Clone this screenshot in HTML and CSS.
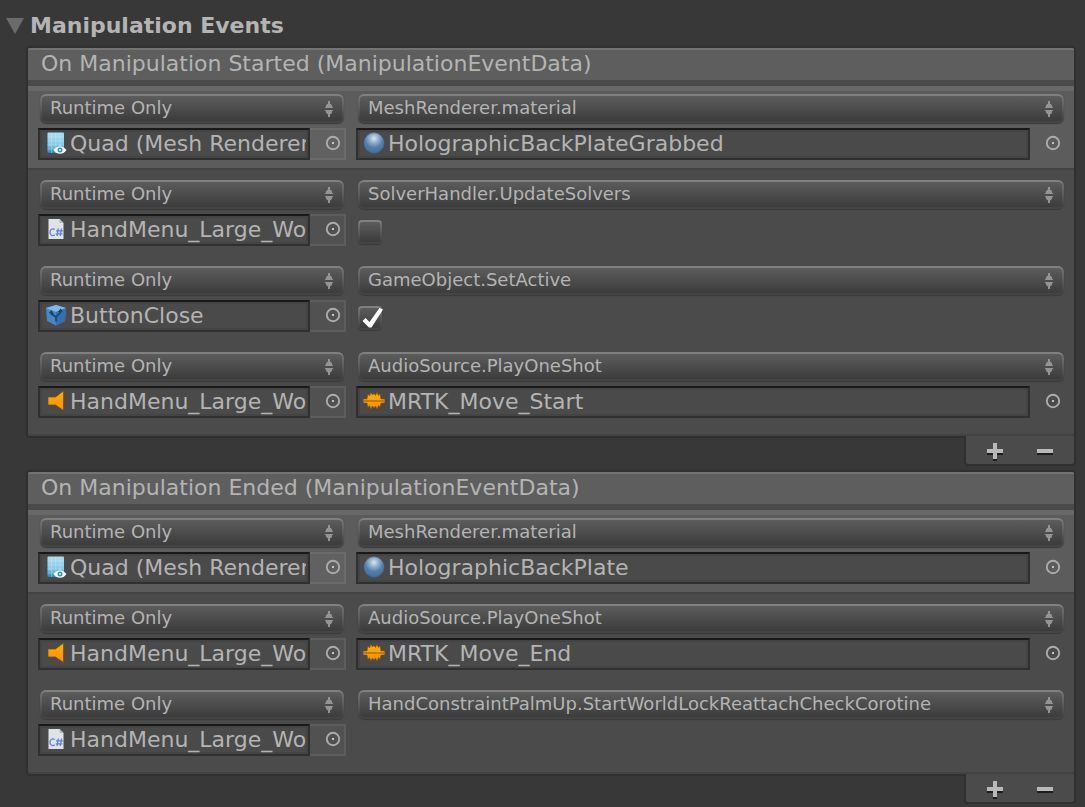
FILE: index.html
```html
<!DOCTYPE html>
<html lang="en">
<head>
<meta charset="utf-8">
<title>Manipulation Events</title>
<link rel="stylesheet" href="styles.css">
</head>
<body>
<svg class="defs" aria-hidden="true">
  <defs>
    <linearGradient id="g-mesh" x1="0" y1="0" x2="0" y2="1"><stop offset="0" stop-color="#a9def2"/><stop offset=".6" stop-color="#83c8e8"/><stop offset="1" stop-color="#2b86bd"/></linearGradient>
    <radialGradient id="g-ball" cx=".5" cy=".28" r=".7"><stop offset="0" stop-color="#dbe6ee"/><stop offset=".3" stop-color="#94b1cb"/><stop offset=".62" stop-color="#5580ab"/><stop offset="1" stop-color="#456f9c"/></radialGradient>
    <linearGradient id="g-sound" x1="0" y1="0" x2="0" y2="1"><stop offset="0" stop-color="#ffb000"/><stop offset="1" stop-color="#ff8c00"/></linearGradient>
    <symbol id="i-mesh" viewBox="0 0 22 22">
      <rect x="2.500" y=".5" width="16.500" height="20.500" rx="1" fill="url(#g-mesh)"/>
      <path d="M6.500 1v20M10.700 1v20M15 1v20M2.500 5H19M2.500 9H19M2.500 13H19M2.500 17H19" stroke="#d6f1fb" stroke-width=".6" opacity=".55"/>
      <path d="M8.500 18C10.500 15.500 12.500 14.500 15 14.500S19.500 15.500 21.500 18C19.500 20.800 17.500 21.700 15 21.700S10.500 20.800 8.500 18z" fill="#f4f8fa"/>
      <circle cx="15" cy="18" r="2.500" fill="#3f92b4"/><circle cx="15" cy="18" r=".9" fill="#e7f4fa"/>
    </symbol>
    <symbol id="i-ball" viewBox="0 0 22 22"><circle cx="11" cy="11" r="10.400" fill="url(#g-ball)" stroke="#3b5470" stroke-width=".6"/></symbol>
    <symbol id="i-script" viewBox="0 0 22 22">
      <path d="M3.500 1h11l4 4v16h-15z" fill="#dfe3e7"/><path d="M14.500 1v4h4z" fill="#b4bac0"/>
      <path d="M9.700 11.500C7.400 10 5 11.300 5 14.200s2.400 4.200 4.700 2.700M13.300 10.500L12.100 18M16.500 10.500L15.300 18M11 12.800h7M10.700 15.800h6.800" fill="none" stroke="#5583dc" stroke-width="1.300"/>
    </symbol>
    <symbol id="i-prefab" viewBox="0 0 22 22">
      <path d="M1 4l10-3 10 3-1 13-9 4.500L2 17z" fill="#4687c8"/>
      <path d="M1 4l10-3 10 3-10 4z" fill="#80b8e8"/>
      <path d="M11 8l10-4-1 13-9 4.500z" fill="#3370b3"/>
      <path d="M11 17.500V13L6.500 10V8M11 13l4.500-4.500V7" fill="none" stroke="#1d4459" stroke-width="1.600"/>
      <path d="M4 9l2.500-3L9 10zM13 8l2.500-3.500L18 7.500z" fill="#1d4459"/>
    </symbol>
    <symbol id="i-speaker" viewBox="0 0 22 22"><path d="M3 7h7.500l8-6v19.500l-8-5.500H3z" fill="url(#g-sound)" stroke="#6b4a14" stroke-width=".7"/></symbol>
    <symbol id="i-wave" viewBox="0 0 22 22">
      <path d="M.3 9H4L5 4l1.500 2L8 2.500 9.500 5 11 3.500 12.500 5.500 14 2.500l1.500 3L17 4l1 5h3.700v4H18l-1 4-1.500-1.500L14 19l-1.500-3L11 18l-1.500-2L8 19l-1.500-3.500L5 17.500 4 13H.3z" fill="url(#g-sound)" stroke="#7a5210" stroke-width=".5"/>
      <path d="M1 11h20" stroke="#8f5500" stroke-width="1"/>
    </symbol>
    <symbol id="i-pick" viewBox="0 0 16 16"><circle cx="8" cy="8" r="6.200" fill="none" stroke="#acacac" stroke-width="1.900"/><rect x="7" y="7" width="2" height="2" fill="#c4c4c4"/></symbol>
    <symbol id="i-updown" viewBox="0 0 10 18"><path d="M4 1h2v2.500L8 5v1.500L9.500 8H.5L2 6.500V5l2-1.500zM.5 10h9L8 11.500V13l-2 1.500V17H4v-2.500L2 13v-1.500z" fill="#949494"/></symbol>
    <symbol id="i-check" viewBox="0 0 24 24"><path d="M2.500 14L5.500 11l4 4L19.500 1l3.500 1.500L11.500 20.500H9z" fill="#fff"/></symbol>
    <symbol id="i-plus" viewBox="0 0 18 18"><path d="M1 10h16v2h-6v6H7v-6H1z" fill="#1d1d1d"/><path d="M7 0h4v6h6v4h-6v6H7v-6H1V6h6z" fill="#b9b9b9"/></symbol>
    <symbol id="i-minus" viewBox="0 0 18 18"><path d="M1 10h16v2H1z" fill="#1d1d1d"/><path d="M1 6h16v4H1z" fill="#b9b9b9"/></symbol>
  </defs>
</svg>
<main class="inspector">
  <h1 class="title"><svg class="fold" viewBox="0 0 18 16" aria-hidden="true"><path d="M0 0h18L9 16z" fill="#6b6b6b"/></svg>Manipulation Events</h1>

  <section class="event">
    <div class="box">
      <h2 class="head">On Manipulation Started (ManipulationEventData)</h2>
      <ul class="list">
        <li class="row selected">
          <div class="drop"><select aria-label="Call state"><option>Runtime Only</option></select><svg><use href="#i-updown"/></svg></div>
          <div class="drop"><select aria-label="Function"><option>MeshRenderer.material</option></select><svg><use href="#i-updown"/></svg></div>
          <div class="object target"><div class="field"><svg><use href="#i-mesh"/></svg><input type="text" readonly aria-label="Target" value="Quad (Mesh Renderer)"></div><button class="pick" aria-label="Select target"><svg><use href="#i-pick"/></svg></button></div>
          <div class="object"><div class="field"><svg><use href="#i-ball"/></svg><input type="text" readonly aria-label="Argument" value="HolographicBackPlateGrabbed"></div><button class="pick" aria-label="Select argument"><svg><use href="#i-pick"/></svg></button></div>
        </li>
        <li class="row">
          <div class="drop"><select aria-label="Call state"><option>Runtime Only</option></select><svg><use href="#i-updown"/></svg></div>
          <div class="drop"><select aria-label="Function"><option>SolverHandler.UpdateSolvers</option></select><svg><use href="#i-updown"/></svg></div>
          <div class="object target"><div class="field"><svg><use href="#i-script"/></svg><input type="text" readonly aria-label="Target" value="HandMenu_Large_WorldLock"></div><button class="pick" aria-label="Select target"><svg><use href="#i-pick"/></svg></button></div>
          <label class="toggle"><input type="checkbox" aria-label="UpdateSolvers"><svg><use href="#i-check"/></svg></label>
        </li>
        <li class="row">
          <div class="drop"><select aria-label="Call state"><option>Runtime Only</option></select><svg><use href="#i-updown"/></svg></div>
          <div class="drop"><select aria-label="Function"><option>GameObject.SetActive</option></select><svg><use href="#i-updown"/></svg></div>
          <div class="object target"><div class="field"><svg><use href="#i-prefab"/></svg><input type="text" readonly aria-label="Target" value="ButtonClose"></div><button class="pick" aria-label="Select target"><svg><use href="#i-pick"/></svg></button></div>
          <label class="toggle"><input type="checkbox" checked aria-label="SetActive"><svg><use href="#i-check"/></svg></label>
        </li>
        <li class="row">
          <div class="drop"><select aria-label="Call state"><option>Runtime Only</option></select><svg><use href="#i-updown"/></svg></div>
          <div class="drop"><select aria-label="Function"><option>AudioSource.PlayOneShot</option></select><svg><use href="#i-updown"/></svg></div>
          <div class="object target"><div class="field"><svg><use href="#i-speaker"/></svg><input type="text" readonly aria-label="Target" value="HandMenu_Large_WorldLock"></div><button class="pick" aria-label="Select target"><svg><use href="#i-pick"/></svg></button></div>
          <div class="object"><div class="field"><svg><use href="#i-wave"/></svg><input type="text" readonly aria-label="Argument" value="MRTK_Move_Start"></div><button class="pick" aria-label="Select argument"><svg><use href="#i-pick"/></svg></button></div>
        </li>
      </ul>
    </div>
    <div class="foot"><button aria-label="Add"><svg><use href="#i-plus"/></svg></button><button aria-label="Remove"><svg><use href="#i-minus"/></svg></button></div>
  </section>

  <section class="event">
    <div class="box">
      <h2 class="head">On Manipulation Ended (ManipulationEventData)</h2>
      <ul class="list">
        <li class="row selected">
          <div class="drop"><select aria-label="Call state"><option>Runtime Only</option></select><svg><use href="#i-updown"/></svg></div>
          <div class="drop"><select aria-label="Function"><option>MeshRenderer.material</option></select><svg><use href="#i-updown"/></svg></div>
          <div class="object target"><div class="field"><svg><use href="#i-mesh"/></svg><input type="text" readonly aria-label="Target" value="Quad (Mesh Renderer)"></div><button class="pick" aria-label="Select target"><svg><use href="#i-pick"/></svg></button></div>
          <div class="object"><div class="field"><svg><use href="#i-ball"/></svg><input type="text" readonly aria-label="Argument" value="HolographicBackPlate"></div><button class="pick" aria-label="Select argument"><svg><use href="#i-pick"/></svg></button></div>
        </li>
        <li class="row">
          <div class="drop"><select aria-label="Call state"><option>Runtime Only</option></select><svg><use href="#i-updown"/></svg></div>
          <div class="drop"><select aria-label="Function"><option>AudioSource.PlayOneShot</option></select><svg><use href="#i-updown"/></svg></div>
          <div class="object target"><div class="field"><svg><use href="#i-speaker"/></svg><input type="text" readonly aria-label="Target" value="HandMenu_Large_WorldLock"></div><button class="pick" aria-label="Select target"><svg><use href="#i-pick"/></svg></button></div>
          <div class="object"><div class="field"><svg><use href="#i-wave"/></svg><input type="text" readonly aria-label="Argument" value="MRTK_Move_End"></div><button class="pick" aria-label="Select argument"><svg><use href="#i-pick"/></svg></button></div>
        </li>
        <li class="row">
          <div class="drop"><select aria-label="Call state"><option>Runtime Only</option></select><svg><use href="#i-updown"/></svg></div>
          <div class="drop"><select aria-label="Function"><option>HandConstraintPalmUp.StartWorldLockReattachCheckCorotine</option></select><svg><use href="#i-updown"/></svg></div>
          <div class="object target"><div class="field"><svg><use href="#i-script"/></svg><input type="text" readonly aria-label="Target" value="HandMenu_Large_WorldLock"></div><button class="pick" aria-label="Select target"><svg><use href="#i-pick"/></svg></button></div>
        </li>
      </ul>
    </div>
    <div class="foot"><button aria-label="Add"><svg><use href="#i-plus"/></svg></button><button aria-label="Remove"><svg><use href="#i-minus"/></svg></button></div>
  </section>
</main>
</body>
</html>
```
FILE: styles.css
```css
* { box-sizing: border-box; }

body {
  margin: 0;
  background: #383838;
  color: #b4b4b4;
  font-family: "DejaVu Sans", Verdana, sans-serif;
  font-size: 22px;
}

svg { display: block; }
.defs { position: absolute; width: 0; height: 0; }

button, input, select {
  margin: 0;
  padding: 0;
  border: 0;
  background: none;
  color: inherit;
  font: inherit;
  outline: none;
}

.inspector { padding: 6px 9px 0 26px; }

.title {
  display: flex;
  align-items: center;
  gap: 6px;
  margin: 0 0 0 -20px;
  font-size: 22px;
  line-height: 40px;
}
.fold { width: 18px; height: 16px; }

.event { margin-bottom: 4px; }

.box {
  border: 2px solid #303030;
  border-radius: 4px;
  background: #4b4b4b;
  overflow: hidden;
}

.head {
  height: 38px;
  margin: 0;
  padding-left: 13px;
  border-top: 2px solid #747474;
  border-bottom: 6px solid #4a4a4a;
  background: #5e5e5e;
  font-size: 22px;
  font-weight: normal;
  line-height: 28px;
  white-space: nowrap;
}

.list {
  margin: 0;
  padding: 0 0 6px;
  border-bottom: 2px solid #434343;
  list-style: none;
}

.row {
  display: grid;
  grid-template-columns: 308px minmax(0, 1fr);
  grid-template-rows: 30px 32px;
  gap: 4px 10px;
  padding: 10px 8px 10px 10px;
}
.row.selected {
  padding: 8px 8px 8px 10px;
  border-bottom: 2px solid #444;
  background: linear-gradient(#686868 5px, #5c5c5c 5px);
}

/* Bevelled controls: the outer gradient shows through the transparent border. */
.drop select,
.toggle input {
  display: block;
  appearance: none;
  border: 2px solid transparent;
  background:
    linear-gradient(#5c5c5c, #3c3c3c) padding-box,
    linear-gradient(#808080 2px, #707070 4px, #444 90%) border-box;
  box-shadow: 0 1px 1px #3a3a3a;
}

.drop { position: relative; margin: 0 2px; }
.drop select {
  width: 100%;
  height: 29px;
  padding: 0 28px 1px 8px;
  border-radius: 6px;
  font-size: 18px;
  line-height: 22px;
}
.drop svg {
  position: absolute;
  top: 6px;
  right: 10px;
  width: 10px;
  height: 18px;
  pointer-events: none;
}

.object { display: flex; }
.field {
  display: flex;
  flex: 1;
  align-items: center;
  gap: 3px;
  min-width: 0;
  height: 32px;
  padding: 0 2px 0 5px;
  border: 2px solid #303030;
  border-top-color: #191919;
  background: #4a4a4a;
  box-shadow: inset 0 0 0 2px #444;
}
.field svg { flex: none; width: 22px; height: 22px; margin-bottom: 2px; }
.field input { flex: 1; min-width: 0; height: 28px; line-height: 28px; }

.pick {
  display: flex;
  flex: none;
  align-items: center;
  width: 36px;
  padding: 0 0 2px 15px;
}
.pick svg { width: 16px; height: 16px; }
.target .pick {
  border: 2px solid #5d5d5d;
  border-left: 0;
  background: #515151;
}
.selected .target .pick { border-color: #6b6b6b; background: #616161; }

.toggle {
  position: relative;
  width: 24px;
  height: 24px;
  margin: 6px 2px 0;
}
.toggle input {
  width: 24px;
  height: 24px;
  border-radius: 4px;
}
.toggle svg {
  display: none;
  position: absolute;
  top: 1px;
  left: 2px;
  width: 24px;
  height: 24px;
  pointer-events: none;
}
.toggle input:checked + svg { display: block; }

.foot {
  position: relative;
  display: flex;
  justify-content: center;
  gap: 32px;
  width: 112px;
  height: 30px;
  margin: -2px 0 0 auto;
  border: 2px solid #303030;
  border-top: 0;
  border-radius: 0 0 4px 4px;
  background: #4b4b4b;
}
.foot button { padding-top: 4px; }
.foot svg { width: 18px; height: 18px; }
```
